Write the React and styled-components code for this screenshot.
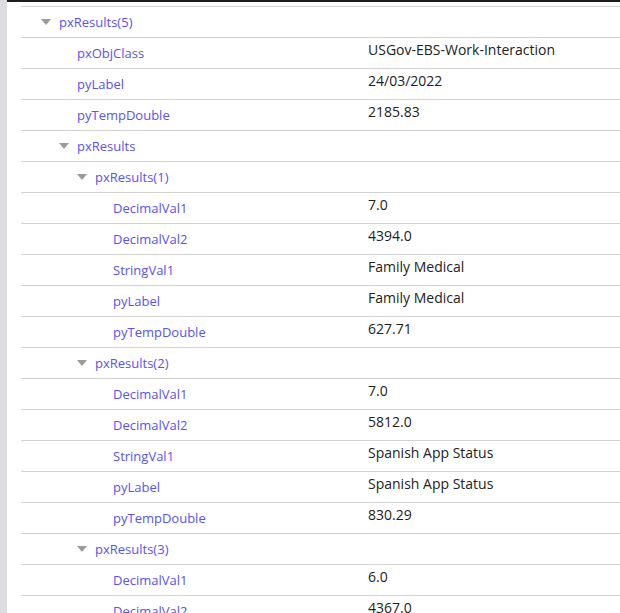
import React from 'react'
import styled, { createGlobalStyle } from 'styled-components'

const GlobalStyle = createGlobalStyle`
  html, body {
    margin: 0;
    padding: 0;
    background: #ffffff;
    overflow: hidden;
  }
  body {
    font-family: 'Open Sans', 'Liberation Sans', sans-serif;
  }
`

const Page = styled.div`
  display: flex;
  height: 613px;
  overflow: hidden;
`

const SideBar = styled.div`
  width: 7px;
  flex-shrink: 0;
  background: #dcdce1;
`

const Main = styled.div`
  flex: 1;
  border-top: 2px solid #1c1c1c;
  padding: 4px 0 0 14px;
`

const Row = styled.div`
  display: grid;
  grid-template-columns: 347px 1fr;
  height: 30px;
  border-top: 1px solid #d2d2d2;
`

const Label = styled.div`
  display: flex;
  align-items: flex-start;
  padding-top: 6px;
  font-size: 13px;
  line-height: 18px;
  color: #5a52f0;
  white-space: nowrap;
`

const Indent = styled.span`
  flex-shrink: 0;
  width: ${p => 20 + p.$level * 18}px;
`

const Toggle = styled.span`
  flex-shrink: 0;
  width: 18px;
  height: 18px;
  display: flex;
  align-items: center;
  &::before {
    content: '';
    display: ${p => (p.$open ? 'block' : 'none')};
    width: 0;
    height: 0;
    border-left: 5px solid transparent;
    border-right: 5px solid transparent;
    border-top: 6px solid #9a9a9a;
  }
`

const Value = styled.div`
  padding-top: 2px;
  font-size: 14px;
  line-height: 19px;
  color: #222222;
  white-space: nowrap;
`

const rows = [
  { label: 'pxResults(5)', level: 0, branch: true },
  { label: 'pxObjClass', level: 1, value: 'USGov-EBS-Work-Interaction' },
  { label: 'pyLabel', level: 1, value: '24/03/2022' },
  { label: 'pyTempDouble', level: 1, value: '2185.83' },
  { label: 'pxResults', level: 1, branch: true },
  { label: 'pxResults(1)', level: 2, branch: true },
  { label: 'DecimalVal1', level: 3, value: '7.0' },
  { label: 'DecimalVal2', level: 3, value: '4394.0' },
  { label: 'StringVal1', level: 3, value: 'Family Medical' },
  { label: 'pyLabel', level: 3, value: 'Family Medical' },
  { label: 'pyTempDouble', level: 3, value: '627.71' },
  { label: 'pxResults(2)', level: 2, branch: true },
  { label: 'DecimalVal1', level: 3, value: '7.0' },
  { label: 'DecimalVal2', level: 3, value: '5812.0' },
  { label: 'StringVal1', level: 3, value: 'Spanish App Status' },
  { label: 'pyLabel', level: 3, value: 'Spanish App Status' },
  { label: 'pyTempDouble', level: 3, value: '830.29' },
  { label: 'pxResults(3)', level: 2, branch: true },
  { label: 'DecimalVal1', level: 3, value: '6.0' },
  { label: 'DecimalVal2', level: 3, value: '4367.0' },
]

const App = () => {
  return (
    <Page>
      <GlobalStyle />
      <SideBar />
      <Main>
        {rows.map((r, i) => (
          <Row key={i}>
            <Label>
              <Indent $level={r.level} />
              <Toggle $open={r.branch} />
              {r.label}
            </Label>
            <Value>{r.value || ''}</Value>
          </Row>
        ))}
      </Main>
    </Page>
  )
}

export default App
